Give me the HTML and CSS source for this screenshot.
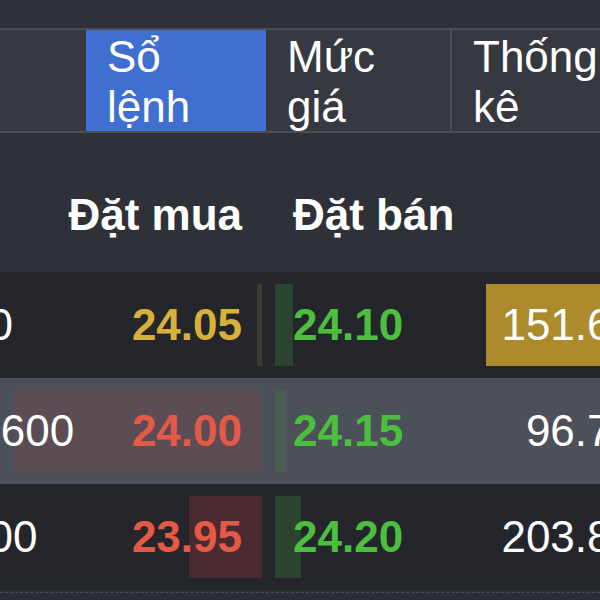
FILE: index.html
```html
<!DOCTYPE html>
<html lang="vi">
<head>
<meta charset="utf-8"/>
<meta content="width=device-width, initial-scale=1.0" name="viewport"/>
<title>Sổ lệnh</title>
<link rel="stylesheet" href="styles.css">
</head>
<body>
<div class="screen">
  <div class="topbar"></div>
  <nav class="tabs">
    <div class="tab tab-blank"></div>
    <a class="tab active" href="#">Sổ<br>lệnh</a>
    <a class="tab" href="#">Mức<br>giá</a>
    <a class="tab" href="#">Thống<br>kê</a>
  </nav>

  <div class="book">
    <div class="book-head">
      <div class="head-bid">Đặt mua</div>
      <div class="head-ask">Đặt bán</div>
      <div></div>
    </div>

    <div class="book-row">
      <div class="bid-cell">
        <span class="depth depth-ref" style="width: 5px"></span>
        <span class="vol">50</span>
        <span class="price ref">24.05</span>
      </div>
      <div class="ask-cell">
        <span class="depth depth-up" style="width: 18px"></span>
        <span class="price up">24.10</span>
      </div>
      <div class="vol-cell hl">151.60</div>
    </div>

    <div class="book-row selected">
      <div class="bid-cell">
        <span class="depth depth-down" style="width: 248px"></span>
        <span class="vol">4.600</span>
        <span class="price down">24.00</span>
      </div>
      <div class="ask-cell">
        <span class="depth depth-up" style="width: 12px"></span>
        <span class="price up">24.15</span>
      </div>
      <div class="vol-cell">96.70</div>
    </div>

    <div class="book-row">
      <div class="bid-cell">
        <span class="depth depth-down" style="width: 73px"></span>
        <span class="vol">900</span>
        <span class="price down">23.95</span>
      </div>
      <div class="ask-cell">
        <span class="depth depth-up" style="width: 26px"></span>
        <span class="price up">24.20</span>
      </div>
      <div class="vol-cell">203.80</div>
    </div>

    <div class="book-foot"></div>
  </div>
</div>
</body>
</html>
```

FILE: styles.css
```css
* {
  box-sizing: border-box;
}

body {
  margin: 0;
  background: #2a2d33;
  color: #fff;
  font-family: "Liberation Sans", Arial, sans-serif;
  overflow: hidden;
}

.screen {
  width: 600px;
  height: 600px;
  overflow: hidden;
}

.topbar {
  height: 28px;
  background: #2e3137;
}

/* tab strip */
.tabs {
  display: flex;
  height: 105px;
  background: #363940;
  border-top: 2px solid #4a4d54;
  border-bottom: 2px solid #4a4d54;
}

.tab {
  flex: none;
  width: 186px;
  padding: 2px 0 0 21px;
  color: #fff;
  text-decoration: none;
  font-size: 44px;
  line-height: 50px;
  border-right: 2px solid #4a4d54;
}

.tab-blank {
  width: 86px;
  border-right: none;
}

.tab.active {
  width: 180px;
  background: #3f6fd0;
  border-right: none;
}

/* order book */
.book {
  width: 700px;
  margin-left: -40px;
  background: #2e3137;
}

.book-head,
.book-row {
  display: grid;
  grid-template-columns: 302px 198px 1fr;
  column-gap: 13px;
}

.book-head {
  height: 139px;
  align-items: end;
  padding-bottom: 32px;
  font-size: 44px;
  line-height: 50px;
  font-weight: bold;
}

.head-bid {
  text-align: right;
  padding-right: 20px;
}

.head-ask {
  padding-left: 18px;
}

.book-row {
  height: 106px;
  background: #24262c;
  font-size: 44px;
  align-items: center;
}

.book-row.selected {
  background: #4b5059;
}

.bid-cell,
.ask-cell {
  position: relative;
  height: 100%;
  display: flex;
  align-items: center;
}

.bid-cell {
  justify-content: space-between;
  padding: 0 20px 0 4px;
}

.ask-cell {
  padding-left: 18px;
}

.depth {
  position: absolute;
  top: 12px;
  bottom: 12px;
}

.bid-cell .depth {
  right: 0;
}

.ask-cell .depth {
  left: 0;
}

.depth-ref {
  background: rgba(210, 175, 60, 0.15);
}

.depth-down {
  background: rgba(220, 60, 60, 0.2);
}

.selected .depth-down {
  background: rgba(220, 60, 60, 0.12);
}

.depth-up {
  background: rgba(70, 190, 60, 0.2);
}

.selected .depth-up {
  background: rgba(70, 190, 60, 0.12);
}

.vol,
.price {
  position: relative;
}

.price {
  font-weight: bold;
}

.price.ref {
  color: #d6b23a;
}

.price.down {
  color: #e55a46;
}

.price.up {
  color: #4cc03e;
}

.vol-cell {
  height: 100%;
  display: flex;
  align-items: center;
  justify-content: flex-end;
  padding-right: 24px;
}

.vol-cell.hl {
  height: 82px;
  background: #ad8a2b;
}

.book-foot {
  height: 10px;
  margin-top: 2px;
  border-top: 1px dashed #484b53;
  background: #2a2d33;
}
```
